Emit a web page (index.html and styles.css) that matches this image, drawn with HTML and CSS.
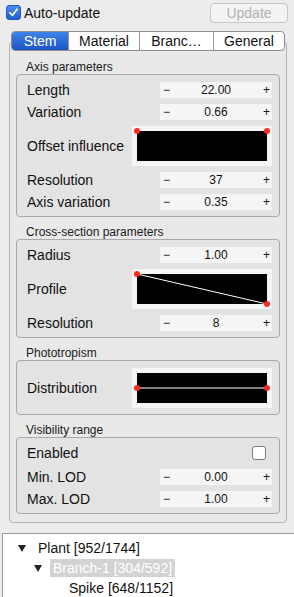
FILE: index.html
```html
<!DOCTYPE html>
<html lang="en">
<head>
    <meta charset="UTF-8">
    <title>Plant editor</title>
    <link rel="stylesheet" href="styles.css">
</head>
<body>
    <div class="topbar">
        <label class="auto">
            <span class="check on"><svg width="11" height="11" viewBox="0 0 11 11"><path d="M2 5.8 L4.5 8.3 L9 2.2" fill="none" stroke="#fff" stroke-width="1.8" stroke-linecap="round" stroke-linejoin="round"/></svg></span>
            Auto-update
        </label>
        <button class="btn" disabled>Update</button>
    </div>

    <div class="tabs">
        <div class="tab active">Stem</div>
        <div class="tab">Material</div>
        <div class="tab">Branc…</div>
        <div class="tab">General</div>
    </div>

    <div class="pane">
        <div class="group-title">Axis parameters</div>
        <div class="group">
            <div class="row"><span>Length</span><div class="spin"><b>−</b><span>22.00</span><b>+</b></div></div>
            <div class="row"><span>Variation</span><div class="spin"><b>−</b><span>0.66</span><b>+</b></div></div>
            <div class="row"><span>Offset influence</span>
                <svg class="curve" width="140" height="40"><rect x="5" y="5" width="130" height="30"/><circle cx="5" cy="5" r="3"/><circle cx="135" cy="5" r="3"/></svg>
            </div>
            <div class="row"><span>Resolution</span><div class="spin"><b>−</b><span>37</span><b>+</b></div></div>
            <div class="row"><span>Axis variation</span><div class="spin"><b>−</b><span>0.35</span><b>+</b></div></div>
        </div>

        <div class="group-title">Cross-section parameters</div>
        <div class="group">
            <div class="row"><span>Radius</span><div class="spin"><b>−</b><span>1.00</span><b>+</b></div></div>
            <div class="row"><span>Profile</span>
                <svg class="curve" width="140" height="40"><rect x="5" y="5" width="130" height="30"/><line x1="5" y1="5" x2="135" y2="35"/><circle cx="5" cy="5" r="3"/><circle cx="135" cy="35" r="3"/></svg>
            </div>
            <div class="row"><span>Resolution</span><div class="spin"><b>−</b><span>8</span><b>+</b></div></div>
        </div>

        <div class="group-title">Phototropism</div>
        <div class="group">
            <div class="row"><span>Distribution</span>
                <svg class="curve" width="140" height="40"><rect x="5" y="5" width="130" height="30"/><line x1="5" y1="20" x2="135" y2="20"/><circle cx="5" cy="20" r="3"/><circle cx="135" cy="20" r="3"/></svg>
            </div>
        </div>

        <div class="group-title">Visibility range</div>
        <div class="group">
            <div class="row enabled"><span>Enabled</span><span class="check"></span></div>
            <div class="row"><span>Min. LOD</span><div class="spin"><b>−</b><span>0.00</span><b>+</b></div></div>
            <div class="row"><span>Max. LOD</span><div class="spin"><b>−</b><span>1.00</span><b>+</b></div></div>
        </div>
    </div>

    <div class="tree">
        <div class="node"><i class="arrow"></i>Plant [952/1744]</div>
        <div class="node lvl1"><i class="arrow"></i><span class="sel">Branch-1 [304/592]</span></div>
        <div class="node lvl2">Spike [648/1152]</div>
    </div>
</body>
</html>
```

FILE: styles.css
```css
/* base */
*{margin:0;padding:0;box-sizing:border-box}
body{width:294px;height:597px;overflow:hidden;background:#ececec;font-family:'Liberation Sans',Arial,sans-serif;font-size:14px;color:#111}
/* top bar */
.topbar{display:flex;justify-content:space-between;align-items:center;height:27px;padding:0 6px 2px 6px}
.auto{display:flex;align-items:center;gap:3px;font-size:14px}
.check{display:inline-flex;align-items:center;justify-content:center;width:15px;height:15px;border:1px solid #8e8e8e;border-radius:3px;background:#fff}
.check.on{background:linear-gradient(#4a8cf0,#1f5fd0);border-color:#2457b8}
.btn{width:78px;height:20px;border:1px solid #c6c6c6;border-radius:4px;background:#f3f3f3;color:#b2b2b2;font:14px 'Liberation Sans',Arial,sans-serif}
/* tabs */
.tabs{position:relative;z-index:1;display:flex;margin:4px 0 -10px 11px;width:274px;height:20px;border:1px solid #8e8e8e;border-radius:4px;background:#fff;overflow:hidden}
.tab{display:flex;align-items:center;justify-content:center;border-left:1px solid #9a9a9a;font-size:14px;color:#111}
.tab:first-child{border-left:none}
.tab:nth-child(1){width:56px}
.tab:nth-child(2){width:71px}
.tab:nth-child(3){width:74px}
.tab:nth-child(4){width:71px}
.tab.active{background:linear-gradient(#3f82ea,#1c55c2);color:#fff}
/* pane */
.pane{margin-left:9px;width:278px;height:482px;border:1px solid #b4b4b4;border-radius:4px;background:#e9e9e9;padding:18px 6px 0 6px}
.group-title{height:14px;line-height:14px;padding-left:10px;font-size:12px;color:#1a1a1a;margin-top:8px}
.group-title:first-child{margin-top:0}
.group{display:flex;flex-direction:column;gap:6px;border:1px solid #a9a9a9;border-radius:4px;background:#e3e3e3;padding:7px 7px 6px 10px}
.row{display:flex;align-items:center;justify-content:space-between;min-height:16px}
.row.enabled{margin-bottom:2px}
.row .check{width:14px;height:14px;margin-right:6px;border-color:#7c7c7c;border-radius:3px}
.spin{display:flex;align-items:center;justify-content:space-between;width:112px;height:16px;background:#f5f5f5;padding:0 3px;font-size:12px}
.spin b{font-weight:400;font-size:12px;width:6px;text-align:center}
.spin span{flex:1;text-align:center}
.curve{display:block;background:#f5f5f5}
.curve rect{fill:#000}
.curve line{stroke:#fff;stroke-width:1}
.curve circle{fill:#ff2a1f}
/* tree */
.tree{margin:10px 0 0 2px;height:70px;border:1px solid #9c9c9c;border-right:none;background:#fff;padding-top:4px}
.node{display:flex;align-items:center;height:20px;padding-left:15px;font-size:14px}
.arrow{display:block;width:0;height:0;border-left:4px solid transparent;border-right:4px solid transparent;border-top:7px solid #222;margin-right:12px}
.node.lvl1{padding-left:31px}
.node.lvl2{padding-left:66px}
.sel{background:#d3d3d3;color:#fff;height:18px;line-height:18px;padding:0 3px;margin-left:-4px}
```
